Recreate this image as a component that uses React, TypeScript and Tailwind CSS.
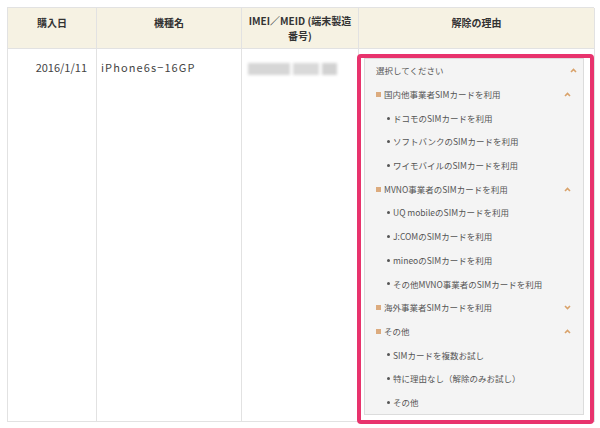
import React from "react";

type Row =
  | { kind: "top"; text: string }
  | { kind: "group"; text: string; open: boolean }
  | { kind: "item"; text: string };

const rows: Row[] = [
  { kind: "top", text: "選択してください" },
  { kind: "group", text: "国内他事業者SIMカードを利用", open: true },
  { kind: "item", text: "ドコモのSIMカードを利用" },
  { kind: "item", text: "ソフトバンクのSIMカードを利用" },
  { kind: "item", text: "ワイモバイルのSIMカードを利用" },
  { kind: "group", text: "MVNO事業者のSIMカードを利用", open: true },
  { kind: "item", text: "UQ mobileのSIMカードを利用" },
  { kind: "item", text: "J:COMのSIMカードを利用" },
  { kind: "item", text: "mineoのSIMカードを利用" },
  { kind: "item", text: "その他MVNO事業者のSIMカードを利用" },
  { kind: "group", text: "海外事業者SIMカードを利用", open: false },
  { kind: "group", text: "その他", open: true },
  { kind: "item", text: "SIMカードを複数お試し" },
  { kind: "item", text: "特に理由なし（解除のみお試し）" },
  { kind: "item", text: "その他" },
];

function Chevron({ up }: { up: boolean }) {
  return (
    <svg width="7" height="5" viewBox="0 0 7 5" className="shrink-0">
      <polyline
        points={up ? "1,4 3.5,1.5 6,4" : "1,1 3.5,3.5 6,1"}
        fill="none"
        stroke="#d9a26a"
        strokeWidth="1.6"
      />
    </svg>
  );
}

function ReasonList() {
  return (
    <div className="-ml-[2px] mt-[5px] h-[370px] w-[237px] rounded-[4px] border-4 border-[#e8336d] bg-white pb-[5px] pl-[3px] pr-[6px]">
      <div className="flex h-full flex-col border border-[#dcdcdc] bg-[#f4f4f4]">
        {rows.map((r, i) => {
          if (r.kind === "top")
            return (
              <div key={i} className="flex h-[23.7px] items-center pl-[11px] pr-[6px]">
                <span className="flex-1 text-[8.5px] text-[#555]">{r.text}</span>
                <Chevron up />
              </div>
            );
          if (r.kind === "group")
            return (
              <div key={i} className="flex h-[23.7px] items-center pl-[11px] pr-[12px]">
                <span className="mr-[3px] h-[5px] w-[5px] bg-[#dcab7e]" />
                <span className="flex-1 text-[8.5px] text-[#555]">{r.text}</span>
                <Chevron up={r.open} />
              </div>
            );
          return (
            <div key={i} className="flex h-[23.7px] items-center pl-[22px]">
              <span className="mr-[3px] h-[3px] w-[3px] rounded-full bg-[#555]" />
              <span className="text-[8.5px] text-[#555]">{r.text}</span>
            </div>
          );
        })}
      </div>
    </div>
  );
}

export default function App() {
  return (
    <div className="h-[428px] w-[600px] overflow-hidden bg-white pl-[7px] pt-[7px] font-['Noto_Sans_CJK_JP',sans-serif]">
      <div className="grid w-[587px] grid-cols-[89px_145px_117px_236px] border-l border-t border-[#e2e2e2]">
        {/* header */}
        <div className="h-[41px] border-b border-r border-[#e2e2e2] bg-[#f6f2e3] pt-[7px] text-center text-[10px] font-bold leading-[15px] text-[#333]">
          購入日
        </div>
        <div className="h-[41px] border-b border-r border-[#e2e2e2] bg-[#f6f2e3] pt-[7px] text-center text-[10px] font-bold leading-[15px] text-[#333]">
          機種名
        </div>
        <div className="h-[41px] border-b border-r border-[#e2e2e2] bg-[#f6f2e3] pt-[5px] text-center text-[10px] font-bold leading-[15px] text-[#333]">
          IMEI／MEID (端末製造
          <br />
          番号)
        </div>
        <div className="h-[41px] border-b border-r border-[#e2e2e2] bg-[#f6f2e3] pt-[7px] text-center text-[10px] font-bold leading-[15px] text-[#333]">
          解除の理由
        </div>

        {/* body */}
        <div className="h-[373px] border-b border-r border-[#e2e2e2] pr-[9px] pt-[10px] text-right text-[11px] leading-[16px] text-[#444]">
          2016/1/11
        </div>
        <div className="h-[373px] border-b border-r border-[#e2e2e2] pl-[4px] pt-[10px] text-[11px] leading-[16px] tracking-[1.1px] text-[#444]">
          iPhone6s−16GP
        </div>
        <div className="h-[373px] border-b border-r border-[#e2e2e2] pl-[6px] pt-[14px]">
          <div className="flex h-[12px] w-[92px] gap-[3px] blur-[1.5px]">
            <div className="w-[42px] bg-[#d6d6d6]" />
            <div className="w-[26px] bg-[#d9d9d9]" />
            <div className="w-[15px] bg-[#d2d2d2]" />
          </div>
        </div>
        <div className="h-[373px] border-b border-r border-[#e2e2e2]">
          <ReasonList />
        </div>
      </div>
    </div>
  );
}
